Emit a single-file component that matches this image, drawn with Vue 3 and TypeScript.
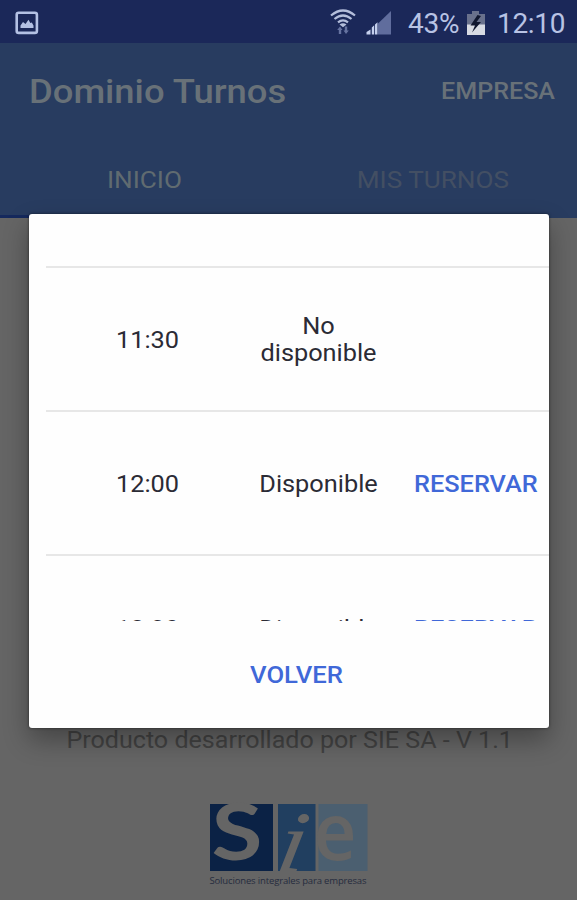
<script setup lang="ts">
interface Slot {
  time: string
  status: string
  available: boolean
}

const slots: Slot[] = [
  { time: '11:30', status: 'No disponible', available: false },
  { time: '12:00', status: 'Disponible', available: true },
  { time: '12:30', status: 'Disponible', available: true },
]
</script>

<template>
  <div class="screen">
    <div class="statusbar">
      <svg class="picture" width="24" height="24" viewBox="0 0 24 24">
        <rect x="1.7" y="1.7" width="20.2" height="20.2" rx="2" fill="none" stroke="#b4c1e4" stroke-width="2.6" />
        <path d="M5.500 17v-2.500l2.500-3.500 2.500 2 3-4.200 1.800 3.200 1.500-.5 1.700 3V17z" fill="#b4c1e4" />
      </svg>
      <div class="indicators">
        <svg class="wifi" width="26" height="28" viewBox="0 0 26 28">
          <g fill="none" stroke="#b4bedb" stroke-width="2.200">
            <path d="M1 6.500Q13-3.500 25 6.500" />
            <path d="M4.500 10Q13 3 21.500 10" />
            <path d="M8 13.400Q13 9.300 18 13.400" />
          </g>
          <path d="M9.500 15.500Q13 12.800 16.500 15.500L13 18.300z" fill="#b4bedb" />
          <path d="M10 17.500l2.500 3.500h-1.300v4H8.800v-4H7.200zM16 25l-2.500-3.500h1.300v-4h2.400v4h1.600z" fill="#6673a0" />
        </svg>
        <svg class="signal" width="26" height="24" viewBox="0 0 26 24">
          <path d="M12 12.500L25 0v23.500H12z" fill="#606d9d" />
          <path d="M.5 23.500v-2.500l4-2.500v5zM5.800 23.500v-7l2.400-2.200v9.200zM9 23.500V13.500l2.500-2.200v12.200z" fill="#c5d0ee" />
        </svg>
        <span class="percent">43%</span>
        <svg class="battery" width="18" height="24" viewBox="0 0 18 24">
          <path d="M0 3h5V0h7v3h6v21H0z" fill="#69718c" />
          <path d="M0 13.500h18V24H0z" fill="#d8dbe3" />
          <path d="M10.500 4L3.500 14.500h4.500L5 21.500l9-10.500H9.500L14 5z" fill="#10172f" />
        </svg>
        <span class="clock">12:10</span>
      </div>
    </div>

    <header class="appbar">
      <div class="titlebar">
        <h1>Dominio Turnos</h1>
        <span class="company">EMPRESA</span>
      </div>
      <nav class="tabs">
        <span class="tab active"><span class="label">INICIO</span></span>
        <span class="tab"><span class="label">MIS TURNOS</span></span>
      </nav>
    </header>

    <main class="content">
      <p class="credit">Producto desarrollado por SIE SA - V 1.1</p>
      <svg class="logo" width="160" height="88" viewBox="0 0 160 88">
        <rect x="1" y="5" width="63" height="67" fill="#0b2245" />
        <rect x="69" y="5" width="37.500" height="67" fill="#213f60" />
        <rect x="109.500" y="5" width="49" height="67" fill="#4b5f70" />
        <g fill="#656565">
          <text class="sans bold" x="2.500" y="61" font-size="79" textLength="51" lengthAdjust="spacingAndGlyphs">S</text>
          <text class="serif" transform="translate(65 71.500) skewX(-10)" font-size="86" textLength="29" lengthAdjust="spacingAndGlyphs">i</text>
          <text class="sans" x="104.500" y="61" font-size="79" textLength="43" lengthAdjust="spacingAndGlyphs">e</text>
        </g>
        <text class="slogan" x="0.500" y="85" font-size="9.500" textLength="157" fill="#252c3e">Soluciones integrales para empresas</text>
      </svg>
    </main>

    <section class="dialog" role="dialog">
      <div class="list">
        <div v-for="slot in slots" :key="slot.time" class="row">
          <span class="time">{{ slot.time }}</span>
          <span class="status">{{ slot.status }}</span>
          <span class="action"><button v-if="slot.available" type="button">RESERVAR</button></span>
        </div>
      </div>
      <footer class="actions">
        <button type="button">VOLVER</button>
      </footer>
    </section>
  </div>
</template>

<style>
body {
  margin: 0;
  background: #656565;
}
</style>

<style scoped>
.screen {
  position: relative;
  display: flex;
  flex-direction: column;
  width: 577px;
  height: 900px;
  overflow: hidden;
  background: #656565;
  font-family: Roboto, 'Liberation Sans', sans-serif;
  font-size: 24px;
}
.statusbar {
  display: flex;
  justify-content: space-between;
  box-sizing: border-box;
  height: 43px;
  flex: none;
  padding: 0 11px 0 15px;
  background: #1b2859;
  color: #b8c3e4;
}
.picture {
  margin-top: 11px;
}
.indicators {
  display: flex;
}
.wifi {
  margin-top: 9px;
}
.signal {
  margin: 11px 0 0 10px;
}
.percent,
.clock {
  font-size: 28px;
  line-height: 48px;
  white-space: nowrap;
}
.percent {
  width: 52px;
  margin-left: 16px;
  letter-spacing: -0.2px;
}
.battery {
  margin: 11px 0 0 7px;
}
.clock {
  width: 69px;
  margin-left: 12px;
  letter-spacing: -0.3px;
}
.appbar {
  flex: none;
  height: 175px;
  background: #283c60;
  color: #687178;
}
.titlebar {
  display: flex;
  justify-content: space-between;
  height: 98px;
  padding: 0 22px 0 29px;
  line-height: 97px;
}
h1 {
  margin: 0;
  font-size: 34px;
  font-weight: 500;
  transform: scaleX(1.07);
  transform-origin: left;
  white-space: nowrap;
}
.company {
  font-weight: 500;
  transform: scaleX(1.045);
  transform-origin: right;
}
.tabs {
  display: flex;
  height: 77px;
  line-height: 79px;
}
.tab {
  flex: 1;
  box-sizing: border-box;
  text-align: center;
  color: #434f63;
}
.active {
  border-bottom: 3px solid #15295d;
  color: #606b70;
}
.label {
  display: inline-block;
  transform: scaleX(1.09);
}
.content {
  flex: 1;
  display: flex;
  flex-direction: column;
  align-items: center;
  justify-content: flex-end;
}
.credit {
  margin: 0;
  padding-left: 2px;
  line-height: 28px;
  transform: scaleX(1.045);
  color: #424242;
  white-space: nowrap;
}
.logo {
  margin: 45px 0 13px;
}
.sans {
  font-family: 'Open Sans', sans-serif;
  font-weight: 600;
}
.bold {
  font-family: Lato, sans-serif;
  font-weight: 700;
}
.serif {
  font-family: 'Liberation Serif', serif;
  font-style: italic;
}
.slogan {
  font-family: 'Open Sans', sans-serif;
}
.dialog {
  position: absolute;
  top: 214px;
  left: 29px;
  display: flex;
  flex-direction: column;
  width: 520px;
  height: 514px;
  border-radius: 3px;
  background: #fefefe;
  box-shadow: 0 0 3px rgba(0, 0, 0, 0.55), 0 12px 26px rgba(0, 0, 0, 0.32);
  color: #2b2b35;
}
.list {
  height: 355px;
  margin-left: 17px;
  padding-top: 52px;
  overflow: hidden;
}
.row {
  display: grid;
  grid-template-columns: 171px 137px 1fr;
  padding-left: 33px;
  align-items: center;
  box-sizing: border-box;
  height: 144px;
  padding-top: 2px;
  border-top: 2px solid #e7e7e7;
  line-height: 27px;
}
.row:last-child {
  padding-top: 4px;
}
.time {
  margin-left: 37px;
  transform: scaleX(1.055);
  transform-origin: left;
}
.status {
  text-align: center;
  transform: scaleX(1.055);
}
.action {
  padding-left: 27px;
}
button {
  padding: 0;
  border: 0;
  background: none;
  color: #4068d8;
  font: 500 24px / 27px Roboto, sans-serif;
  transform: scaleX(1.055);
  transform-origin: left;
  white-space: nowrap;
}
.actions {
  padding: 40px 0 0 221px;
}
.actions button {
  transform: scaleX(1.07);
}
</style>
